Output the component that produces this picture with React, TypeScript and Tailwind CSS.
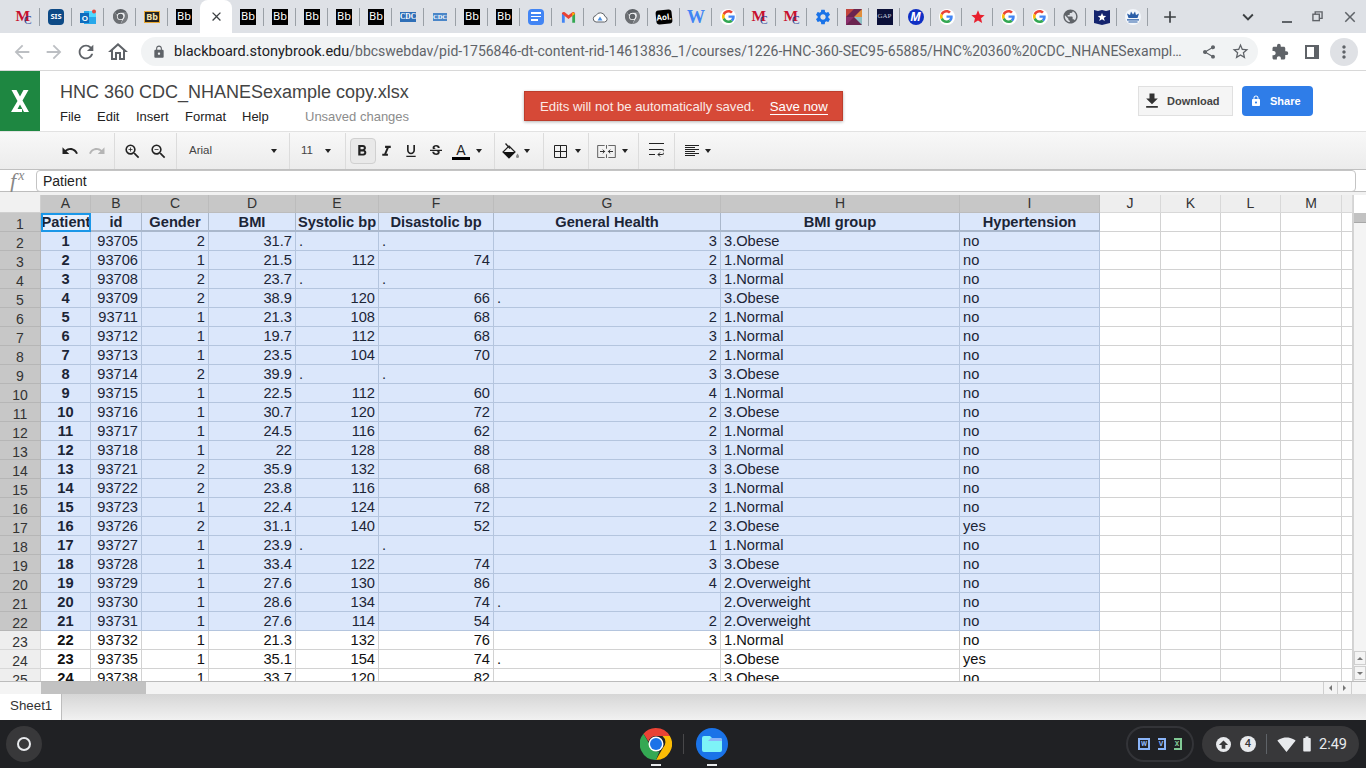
import type { ReactNode } from "react";
import {
  MdAdd,
  MdArrowBack,
  MdArrowForward,
  MdBatteryStd,
  MdClose,
  MdExpandMore,
  MdExtension,
  MdFileDownload,
  MdFormatBold,
  MdFormatItalic,
  MdFormatUnderlined,
  MdLock,
  MdMoreVert,
  MdOutlineHome,
  MdPublic,
  MdRedo,
  MdRefresh,
  MdSettings,
  MdShare,
  MdSignalWifi4Bar,
  MdStar,
  MdStarBorder,
  MdStrikethroughS,
  MdUndo,
  MdZoomIn,
  MdZoomOut,
} from "react-icons/md";

type Fav =
  | "mc" | "sis" | "outlook" | "chrome" | "bbgold" | "bb" | "close" | "cdc" | "cdcs" | "docs" | "gmail"
  | "cloud" | "aol" | "w" | "google" | "gear" | "k" | "gap" | "m" | "star" | "globe" | "shield" | "crown";

const tabs: Fav[] = [
  "mc", "sis", "outlook", "chrome", "bbgold", "bb", "close", "bb", "bb", "bb", "bb", "bb", "cdc", "cdcs",
  "bb", "bb", "docs", "gmail", "cloud", "chrome", "aol", "w", "google", "mc",
  "mc", "gear", "k", "gap", "m", "google", "star", "google", "google", "globe", "shield", "crown",
];

function GoogleG() {
  return (
    <span className="flex h-4 w-4 items-center justify-center rounded-full bg-white">
      <svg viewBox="0 0 48 48" className="h-[13px] w-[13px]">
        <path fill="#EA4335" d="M24 9.5c3.5 0 6.7 1.2 9.2 3.6l6.9-6.9C35.9 2.4 30.4 0 24 0 14.6 0 6.500 5.400 2.600 13.200l8 6.200C12.500 13.700 17.800 9.500 24 9.500z" />
        <path fill="#4285F4" d="M46.900 24.500c0-1.600-.1-3.100-.4-4.500H24v9h12.900c-.6 3-2.200 5.500-4.700 7.200l7.700 6c4.500-4.200 7-10.300 7-17.700z" />
        <path fill="#FBBC05" d="M10.500 28.700c-.5-1.500-.8-3-.8-4.700s.3-3.200.8-4.700l-8-6.200C.9 16.500 0 20.100 0 24s.9 7.500 2.600 10.800l7.900-6.100z" />
        <path fill="#34A853" d="M24 48c6.500 0 11.900-2.100 15.900-5.800l-7.700-6c-2.200 1.400-4.900 2.300-8.200 2.300-6.200 0-11.500-4.200-13.400-9.800l-8 6.100C6.500 42.600 14.600 48 24 48z" />
      </svg>
    </span>
  );
}

function ChromeLogo({
  className,
  red,
  yellow,
  green,
  center,
}: {
  className: string;
  red: string;
  yellow: string;
  green: string;
  center: string;
}) {
  return (
    <svg viewBox="0 0 32 32" className={className}>
      <path d="M16 0a16 16 0 0 1 13.860 8H16a8 8 0 0 0-7.600 5.500L3.500 5.700A16 16 0 0 1 16 0z" fill={red} />
      <path d="M29.860 8A16 16 0 0 1 16 32l6.900-12a8 8 0 0 0-.4-12z" fill={yellow} />
      <path d="M16 32A16 16 0 0 1 3.500 5.700l6 10.300a8 8 0 0 0 10 7.200L16 32z" fill={green} />
      <circle cx="16" cy="16" r="7.500" fill="#fff" />
      <circle cx="16" cy="16" r="6" fill={center} />
    </svg>
  );
}

function Favicon({ kind }: { kind: Fav }) {
  switch (kind) {
    case "mc":
      return (
        <svg viewBox="0 0 18 18" className="h-[18px] w-[18px] overflow-visible">
          <text x="0.500" y="13" fontFamily="Liberation Serif" fontWeight="700" fontSize="15.500" fill="#c8102e">M</text>
          <text x="9" y="16" fontFamily="Liberation Serif" fontSize="11.500" fill="#1d3f94">C</text>
        </svg>
      );
    case "sis":
      return (
        <span className="flex h-4 w-4 items-center justify-center rounded-sm bg-[#0d4a86] text-[7.500px] font-bold text-white">SIS</span>
      );
    case "outlook":
      return (
        <svg viewBox="0 0 16 16" className="h-4 w-4">
          <rect x="4" y="2" width="12" height="13" fill="#28a8ea" />
          <rect x="9" y="2" width="7" height="6" fill="#50d9ff" />
          <circle cx="14" cy="2.500" r="2" fill="#e4473c" />
          <rect x="0" y="4" width="9" height="10" fill="#0f6cbd" />
          <text x="1.700" y="12" fontFamily="Liberation Sans" fontWeight="700" fontSize="8" fill="#fff">O</text>
        </svg>
      );
    case "chrome":
      return <ChromeLogo className="h-[15px] w-[15px]" red="#5f6368" yellow="#7a7d81" green="#6c6f73" center="#5f6368" />;
    case "bbgold":
      return (
        <span className="flex h-[12px] w-4 items-center justify-center border border-[#e8a833] bg-[#222] text-[9px] font-bold text-[#f3e3b0]">Bb</span>
      );
    case "bb":
      return (
        <span className="flex h-4 w-4 items-center justify-center bg-black text-[11px] text-white">Bb</span>
      );
    case "close":
      return <MdClose className="h-[15px] w-[15px] text-[#3c4043]" />;
    case "cdc":
      return (
        <span className="flex h-[10px] w-4 items-center justify-center bg-[#2f6fb7] font-['Liberation_Serif'] text-[7.500px] font-bold text-white">CDC</span>
      );
    case "cdcs":
      return (
        <span className="flex h-[8px] w-[14px] items-center justify-center bg-[#4a86c8] font-['Liberation_Serif'] text-[6.500px] font-bold text-white">CDC</span>
      );
    case "docs":
      return (
        <span className="flex h-4 w-4 flex-col justify-center gap-[2px] rounded-sm bg-[#4285f4] px-[3px]">
          <span className="h-[1.500px] w-full bg-white" />
          <span className="h-[1.500px] w-full bg-white" />
          <span className="h-[1.500px] w-2/3 bg-white" />
        </span>
      );
    case "gmail":
      return (
        <svg viewBox="0 0 16 12" className="h-[12px] w-[15px]">
          <path d="M1 12V2l3 2.500V12z" fill="#4285f4" />
          <path d="M12 12V4.500L15 2v10z" fill="#34a853" />
          <path d="M1 2.500C1 .8 2.500 0 4 1l4 3 4-3c1.500-1 3 0 3 1.500L12 5 8 8 4 5z" fill="#ea4335" />
          <path d="M12 1l3 1.500-3 2.500z" fill="#fbbc05" />
        </svg>
      );
    case "cloud":
      return (
        <svg viewBox="0 0 16 12" className="h-[12px] w-4">
          <path d="M4 11h8.500a2.800 2.800 0 0 0 .5-5.500A4.800 4.800 0 0 0 4 4.500 3.300 3.300 0 0 0 4 11z" fill="#fff" stroke="#5f6368" strokeWidth="1" />
          <path d="M5.500 9.500L8 5.500l2.500 4z" fill="#4a90e2" />
        </svg>
      );
    case "aol":
      return (
        <span className="flex h-[14px] w-4 -rotate-6 items-center justify-center rounded-[3px] bg-black text-[8px] font-bold text-white">Aol.</span>
      );
    case "w":
      return <span className="font-['Liberation_Serif'] text-[18px] leading-none font-bold text-[#4285f4]">W</span>;
    case "google":
      return <GoogleG />;
    case "gear":
      return <MdSettings className="h-[18px] w-[18px] text-[#1a73e8]" />;
    case "k":
      return (
        <svg viewBox="0 0 16 16" className="h-4 w-4">
          <rect width="16" height="16" fill="#6b2450" />
          <path d="M0 0h8L0 8z" fill="#c2453d" />
          <path d="M16 0v8H8z" fill="#e08e3c" />
          <path d="M8 8h8v8z" fill="#8ebfc4" />
          <path d="M0 8h8L0 16z" fill="#8b2f6b" />
        </svg>
      );
    case "gap":
      return (
        <span className="flex h-4 w-4 items-center justify-center bg-[#0b1038] font-['Liberation_Serif'] text-[7px] text-[#c4cadd]">GAP</span>
      );
    case "m":
      return (
        <span className="flex h-4 w-4 items-center justify-center rounded-full bg-[#0f2fc4] text-[12px] font-bold text-white italic">M</span>
      );
    case "star":
      return <MdStar className="h-[16px] w-[16px] text-[#e8202e]" />;
    case "globe":
      return <MdPublic className="h-[17px] w-[17px] text-[#5f6368]" />;
    case "shield":
      return (
        <svg viewBox="0 0 16 16" className="h-4 w-4">
          <path d="M0 1l4 1 4-1 4 1 4-1v13l-8 2-8-2z" fill="#14246e" />
          <path d="M8 4l1.200 2.800 3 .2-2.300 1.900.8 3L8 10.300l-2.700 1.600.8-3L3.800 7l3-.2z" fill="#fff" />
        </svg>
      );
    case "crown":
      return (
        <svg viewBox="0 0 16 16" className="h-4 w-4">
          <circle cx="8" cy="8" r="8" fill="#f2f6fb" />
          <path d="M3.500 9L2 4.500l3 1.500L6 2.500 8 5.500l2-3 1 3.500 3-1.500L12.500 9z" fill="#2a5ea8" />
          <path d="M2 10.800h12M3.500 13h9" stroke="#2a5ea8" strokeWidth="1.200" />
        </svg>
      );
  }
}

function TabStrip() {
  return (
    <div className="flex h-[33px] items-stretch bg-[#dee1e6] pl-2">
      {tabs.map((kind, i) => {
        const active = kind === "close";
        const beforeActive = tabs[i + 1] === "close";
        return (
          <div
            key={i}
            className={
              (i < 24 ? "w-8 " : "w-[31px] ") +
              (active ? "rounded-t-lg bg-white " : "") +
              "relative flex items-center justify-center"
            }
          >
            <span className="flex h-[18px] w-[18px] items-center justify-center">
              <Favicon kind={kind} />
            </span>
            {!active && !beforeActive && <span className="absolute top-2 right-0 h-[18px] w-px bg-[#9aa0a6]" />}
          </div>
        );
      })}
      <div className="ml-[11px] flex w-[22px] items-center justify-center">
        <MdAdd className="h-[20px] w-[20px] text-[#3c4043]" />
      </div>
      <div className="ml-[55px] flex w-[24px] items-center justify-center">
        <MdExpandMore className="h-[22px] w-[22px] text-[#3c4043]" />
      </div>
      <div className="ml-[15px] flex w-[24px] items-center justify-center pt-[3px]">
        <span className="mt-[8px] h-[2px] w-[10px] bg-[#5f6368]" />
      </div>
      <div className="ml-[6px] flex w-[24px] items-center justify-center">
        <svg viewBox="0 0 12 12" className="h-[11px] w-[11px] fill-none stroke-[#5f6368] stroke-[1.500]">
          <rect x="1" y="3.500" width="7" height="7" />
          <path d="M3.500 3.500V1h7.500v7H8" />
        </svg>
      </div>
      <div className="ml-[9px] flex w-[24px] items-center justify-center">
        <MdClose className="h-[18px] w-[18px] text-[#5f6368]" />
      </div>
    </div>
  );
}

function AddressBar() {
  return (
    <div className="flex h-[38px] items-center border-b border-[#d8d8d8] bg-white font-['Roboto',sans-serif]">
      <div className="flex w-[141px] items-center pl-[11px]">
        <MdArrowBack className="h-[22px] w-[22px] text-[#bcbfc3]" />
        <MdArrowForward className="ml-[10px] h-[22px] w-[22px] text-[#bcbfc3]" />
        <MdRefresh className="ml-[10px] h-[22px] w-[22px] text-[#5f6368]" />
        <MdOutlineHome className="ml-[9px] h-[24px] w-[24px] text-[#5f6368]" />
      </div>
      <div className="flex h-[29px] w-[1117px] items-center rounded-full bg-[#f1f3f4] pl-[11px]">
        <MdLock className="h-[14px] w-[14px] text-[#5f6368]" />
        <span className="ml-[8px] w-[1012px] truncate text-[14px] text-[#5f6368]">
          <span className="text-[14.500px] text-[#202124]">blackboard.stonybrook.edu</span>
          /bbcswebdav/pid-1756846-dt-content-rid-14613836_1/courses/1226-HNC-360-SEC95-65885/HNC%20360%20CDC_NHANESexampl…
        </span>
        <MdShare className="ml-[15px] h-[16px] w-[16px] text-[#5f6368]" />
        <MdStarBorder className="ml-[14px] h-[19px] w-[19px] text-[#5f6368]" />
      </div>
      <MdExtension className="ml-[13px] h-[18px] w-[18px] text-[#5f6368]" />
      <svg viewBox="0 0 14 14" className="ml-[16px] h-[14px] w-[14px]">
        <path d="M0 0h14v14H0z" fill="#5f6368" />
        <path d="M2 2h7v10H2z" fill="#fff" />
      </svg>
      <div className="ml-[11px] flex h-[28px] w-[28px] items-center justify-center rounded-full bg-[#dfe1e5]">
        <MdMoreVert className="h-[20px] w-[20px] text-[#5f6368]" />
      </div>
    </div>
  );
}

function TitleArea() {
  return (
    <div className="flex h-[61px] border-b border-[#e2e2e2] bg-white font-['Liberation_Sans',sans-serif]">
      <div className="flex w-10 items-center justify-center bg-[#1e8741]">
        <svg viewBox="0 0 18 22" className="h-[22px] w-[18px]">
          <path d="M.5 0h5L9 6.500 12.500 0h5l-6 10.500L18 22h-5l-4-7.500L6.500 19H11v3H0l6.500-11z" fill="#fff" />
        </svg>
      </div>
      <div className="w-[484px] pt-[9px] pl-[20px]">
        <div className="text-[18px] leading-[24px] text-[#444]">HNC 360 CDC_NHANESexample copy.xlsx</div>
        <div className="mt-[4px] flex text-[13px] leading-[18px] text-[#222]">
          <span className="w-[37px]">File</span>
          <span className="w-[39px]">Edit</span>
          <span className="w-[49px]">Insert</span>
          <span className="w-[57px]">Format</span>
          <span className="w-[63px]">Help</span>
          <span className="text-[#8c8c8c]">Unsaved changes</span>
        </div>
      </div>
      <div className="mt-[20px] flex h-[30px] w-[319px] items-center border border-[#bd3d2c] bg-[#d64937] pt-px pl-[15px] text-[13.200px] text-[#fbe9e6] shadow-[0_1px_3px_rgba(0,0,0,0.3)]">
        <span>Edits will not be automatically saved.</span>
        <span className="ml-[15px] border-b border-white leading-[15px] text-white">Save now</span>
      </div>
      <div className="mt-[15px] ml-[295px] flex h-[30px] w-[95px] items-center gap-[5px] border border-[#e0e0e0] bg-[#f5f5f5] pl-[3px] text-[11px] font-bold text-[#444]">
        <MdFileDownload className="h-[20px] w-[20px] text-[#333]" />
        Download
      </div>
      <div className="mt-[15px] ml-[9px] flex h-[30px] w-[71px] items-center gap-[8px] rounded-sm bg-[#2f7de8] pl-[8px] text-[11px] font-bold text-white">
        <MdLock className="h-[12px] w-[12px]" />
        Share
      </div>
    </div>
  );
}

function Caret() {
  return <span className="h-0 w-0 border-x-[3.500px] border-t-[4px] border-x-transparent border-t-[#222]" />;
}

function ToolGroup({ width, className = "", children }: { width: string; className?: string; children: ReactNode }) {
  return (
    <div className={width + " flex h-full items-center border-r border-[#dcdcdc] " + className}>{children}</div>
  );
}

function Toolbar() {
  return (
    <div className="flex h-[38px] border-b border-[#c0c0c0] bg-gradient-to-b from-[#f8f8f8] to-[#ececec] pt-px font-['Liberation_Sans',sans-serif] text-[#222]">
      <ToolGroup width="w-[115px]" className="pl-[61px]">
        <MdUndo className="h-[18px] w-[18px] text-[#222]" />
        <MdRedo className="ml-[9px] h-[18px] w-[18px] text-[#b5b5b5]" />
      </ToolGroup>
      <ToolGroup width="w-[62px]" className="pl-[8px]">
        <MdZoomIn className="h-[19px] w-[19px] text-[#222]" />
        <MdZoomOut className="ml-[7px] h-[19px] w-[19px] text-[#222]" />
      </ToolGroup>
      <ToolGroup width="w-[113px]" className="pl-[12px] text-[11.500px] text-[#444]">
        <span className="w-[82px]">Arial</span>
        <Caret />
      </ToolGroup>
      <ToolGroup width="w-[56px]" className="pl-[11px] text-[11.500px] text-[#444]">
        <span className="w-[24px]">11</span>
        <Caret />
      </ToolGroup>
      <ToolGroup width="w-[149px]" className="pl-[4px]">
        <span className="flex h-[26px] w-[26px] items-center justify-center rounded-sm border border-[#d0d0d0] bg-[#e9e9e9] pr-[3px]">
          <MdFormatBold className="h-[18px] w-[18px]" />
        </span>
        <span className="flex w-[20px] justify-center"><MdFormatItalic className="h-[17px] w-[17px]" /></span>
        <span className="ml-[5px] flex w-[20px] justify-center"><MdFormatUnderlined className="h-[16px] w-[16px]" /></span>
        <span className="ml-[5px] flex w-[20px] justify-center"><MdStrikethroughS className="h-[16px] w-[16px]" /></span>
        <span className="ml-[6px] flex w-[18px] flex-col items-center text-[14px] leading-[14px]">
          A
          <span className="h-[3px] w-[18px] bg-black" />
        </span>
        <span className="ml-[6px] flex"><Caret /></span>
      </ToolGroup>
      <ToolGroup width="w-[49px]" className="pl-[7px]">
        <svg viewBox="0 0 18 16" className="h-[16px] w-[18px]">
          <path d="M7 3l6 6-6 6-6-6z" fill="none" stroke="#222" strokeWidth="1.200" />
          <path d="M1 9h12l-6 6z" fill="#111" />
          <path d="M3.500 0.500l4.500 5" stroke="#222" strokeWidth="1.300" />
          <path d="M15.500 10.500c1 1.500 1.500 2.300 1.500 3a1.500 1.500 0 0 1-3 0c0-.7.5-1.500 1.500-3z" fill="#888" />
        </svg>
        <span className="ml-[4px] flex"><Caret /></span>
      </ToolGroup>
      <ToolGroup width="w-[45px]" className="pl-[10px]">
        <svg viewBox="0 0 13 13" className="h-[13px] w-[13px] fill-none stroke-[#222]">
          <path d="M.5.500h12v12H.500zM6.500.500v12M.5 6.500h12" />
        </svg>
        <span className="ml-[8px] flex"><Caret /></span>
      </ToolGroup>
      <ToolGroup width="w-[50px]" className="pl-[8px]">
        <svg viewBox="0 0 20 14" className="h-[13px] w-[19px] fill-none stroke-[#555]">
          <path d="M8 .5H.5v13H8M12 .5h7.500v13H12M10 0v4M10 10v4" />
          <path d="M3 7h5M17 7h-5M6 5l2 2-2 2M14 5l-2 2 2 2" stroke="#222" />
        </svg>
        <span className="ml-[6px] flex"><Caret /></span>
      </ToolGroup>
      <ToolGroup width="w-[36px]" className="justify-center">
        <svg viewBox="0 0 15 16" className="h-[16px] w-[15px] fill-none stroke-[#222]">
          <path d="M0 .5h15M0 6.500h13a2.500 2.500 0 0 1 0 5H9M11 9.500l-2 2 2 2M0 11.500h6" />
        </svg>
      </ToolGroup>
      <div className="flex h-full items-center pl-[10px]">
        <svg viewBox="0 0 14 12" className="h-[12px] w-[14px] stroke-[#222]">
          <path d="M0 .5h14M0 2.500h10M0 4.500h14M0 6.500h10M0 8.500h14M0 10.500h10" />
        </svg>
        <span className="ml-[6px] flex"><Caret /></span>
      </div>
    </div>
  );
}

function FormulaBar() {
  return (
    <div className="flex h-[22px] items-start border-b border-[#bdbdbd] bg-white font-['Liberation_Sans',sans-serif]">
      <span className="flex w-[36px] items-start pl-[10px] font-['Liberation_Serif'] text-[#888] italic">
        <span className="text-[22px] leading-[22px]">f</span>
        <span className="ml-[2px] text-[14px] leading-[12px]">x</span>
      </span>
      <div className="h-[22px] w-[1320px] rounded-sm border border-[#c4c4c4] pl-[6px] text-[14px] leading-[20px] text-[#222]">Patient</div>
    </div>
  );
}

type Row = [number, number, number, string, string, string, string, string, string];
const rows: Row[] = [
  [1, 93705, 2, "31.7", ".", ".", "3", "3.Obese", "no"],
  [2, 93706, 1, "21.5", "112", "74", "2", "1.Normal", "no"],
  [3, 93708, 2, "23.7", ".", ".", "3", "1.Normal", "no"],
  [4, 93709, 2, "38.9", "120", "66", ".", "3.Obese", "no"],
  [5, 93711, 1, "21.3", "108", "68", "2", "1.Normal", "no"],
  [6, 93712, 1, "19.7", "112", "68", "3", "1.Normal", "no"],
  [7, 93713, 1, "23.5", "104", "70", "2", "1.Normal", "no"],
  [8, 93714, 2, "39.9", ".", ".", "3", "3.Obese", "no"],
  [9, 93715, 1, "22.5", "112", "60", "4", "1.Normal", "no"],
  [10, 93716, 1, "30.7", "120", "72", "2", "3.Obese", "no"],
  [11, 93717, 1, "24.5", "116", "62", "2", "1.Normal", "no"],
  [12, 93718, 1, "22", "128", "88", "3", "1.Normal", "no"],
  [13, 93721, 2, "35.9", "132", "68", "3", "3.Obese", "no"],
  [14, 93722, 2, "23.8", "116", "68", "3", "1.Normal", "no"],
  [15, 93723, 1, "22.4", "124", "72", "2", "1.Normal", "no"],
  [16, 93726, 2, "31.1", "140", "52", "2", "3.Obese", "yes"],
  [17, 93727, 1, "23.9", ".", ".", "1", "1.Normal", "no"],
  [18, 93728, 1, "33.4", "122", "74", "3", "3.Obese", "no"],
  [19, 93729, 1, "27.6", "130", "86", "4", "2.Overweight", "no"],
  [20, 93730, 1, "28.6", "134", "74", ".", "2.Overweight", "no"],
  [21, 93731, 1, "27.6", "114", "54", "2", "2.Overweight", "no"],
  [22, 93732, 1, "21.3", "132", "76", "3", "1.Normal", "no"],
  [23, 93735, 1, "35.1", "154", "74", ".", "3.Obese", "yes"],
  [24, 93738, 1, "33.7", "120", "82", "3", "3.Obese", "no"],
];

const headers = ["Patient", "id", "Gender", "BMI", "Systolic bp", "Disastolic bp", "General Health", "BMI group", "Hypertension"];
const letters = ["A", "B", "C", "D", "E", "F", "G", "H", "I", "J", "K", "L", "M", ""];

function Cell({ value, col, selected }: { value?: string; col: number; selected: boolean }) {
  const isText = value === "." || col === 7 || col === 8;
  return (
    <div
      className={
        "h-full overflow-hidden border-r border-b px-[3px] text-[14.670px] leading-[19px] whitespace-nowrap " +
        (selected ? "border-[#b4c5de] bg-[#dbe7fb] text-[#1c2536] " : "border-[#d2d2d2] bg-white text-[#111] ") +
        (col === 0 ? "text-center font-bold " : isText ? "text-left " : "text-right ")
      }
    >
      {value}
    </div>
  );
}

function SheetGrid() {
  return (
    <div className="grid h-[486px] grid-cols-[41px_50px_51px_67px_87px_83px_115px_227px_239px_140px_61px_60px_60px_61px_11px] grid-rows-[18px_19px_repeat(24,19px)] overflow-hidden font-['Liberation_Sans',sans-serif]">
      <div className="border-r border-b border-[#d0d0d0] bg-[#f1f1f1]" />
      {letters.map((l, i) => (
        <div
          key={i}
          className={
            "border-r border-b text-center text-[14px] leading-[17px] text-[#333] " +
            (i < 9 ? "border-[#bcbcbc] bg-[#c7c7c7]" : "border-[#d8d8d8] bg-[#eeeeee]")
          }
        >
          {l}
        </div>
      ))}

      <div className="border-r border-b border-[#b6b6b6] bg-[#c7c7c7] pt-[3px] text-center text-[14px] leading-[17px] text-[#333]">1</div>
      {letters.map((_, i) =>
        i === 0 ? (
          <div key={i} className="flex justify-center overflow-hidden border-2 border-[#1a97e8] bg-[#e6effc] text-[14.670px] leading-[15px] font-bold whitespace-nowrap text-[#1c2536]">
            <span className="shrink-0">Patient</span>
          </div>
        ) : i < 9 ? (
          <div key={i} className="overflow-hidden border-r border-b-2 border-[#aab8cc] bg-[#dbe7fb] text-center text-[14.670px] leading-[18px] font-bold whitespace-nowrap text-[#1c2536]">
            {headers[i]}
          </div>
        ) : (
          <Cell key={i} col={i} selected={false} />
        ),
      )}

      {rows.map((row, r) => (
        <div key={r} className="contents">
          <div
            className={
              "border-r border-b pt-[3px] text-center text-[14px] leading-[17px] text-[#333] " +
              (r < 21 ? "border-[#b6b6b6] bg-[#c7c7c7]" : "border-[#d8d8d8] bg-[#eeeeee]")
            }
          >
            {r + 2}
          </div>
          {letters.map((_, c) => (
            <Cell key={c} col={c} value={c < 9 ? String(row[c]) : undefined} selected={r < 21 && c < 9} />
          ))}
        </div>
      ))}
    </div>
  );
}

function VScroll() {
  return (
    <div className="flex h-[486px] w-[13px] flex-col border-l border-[#d4d4d4] bg-[#f4f4f4]">
      <div className="h-[18px] bg-white" />
      <div className="h-[10px] border-b border-[#a8a8a8] bg-[#c2c2c2]" />
      <div className="flex-1" />
      <div className="flex h-[14px] items-center justify-center border border-[#cfcfcf]">
        <span className="h-0 w-0 border-x-[3px] border-b-[3px] border-x-transparent border-b-[#777]" />
      </div>
      <div className="mt-px flex h-[14px] items-center justify-center border border-[#cfcfcf]">
        <span className="h-0 w-0 border-x-[3px] border-t-[3px] border-x-transparent border-t-[#777]" />
      </div>
      <div className="h-px" />
    </div>
  );
}

function HScroll() {
  return (
    <div className="flex h-[13px] border-t border-[#bcbcbc] bg-[#f4f4f4]">
      <div className="w-[41px]" />
      <div className="w-[105px] bg-[#c2c2c2]" />
      <div className="w-[1177px]" />
      <div className="flex w-[15px] items-center justify-center border-x border-[#cfcfcf]">
        <span className="h-0 w-0 border-y-[3px] border-r-[3px] border-y-transparent border-r-[#777]" />
      </div>
      <div className="flex w-[14px] items-center justify-center border-r border-[#cfcfcf]">
        <span className="h-0 w-0 border-y-[3px] border-l-[3px] border-y-transparent border-l-[#777]" />
      </div>
    </div>
  );
}

function SheetTabs() {
  return (
    <div className="flex h-[26px] bg-gradient-to-b from-[#d6d6d6] to-[#f1f1f1] font-['Liberation_Sans',sans-serif]">
      <div className="h-full w-[62px] border-r border-[#bdbdbd] bg-white pl-[10px] text-[13.330px] leading-[24px] text-[#333]">Sheet1</div>
    </div>
  );
}

function Taskbar() {
  return (
    <div className="flex h-12 items-center bg-[#202124] font-['Roboto',sans-serif]">
      <div className="ml-[6px] flex h-9 w-9 items-center justify-center rounded-full bg-[#38383a]">
        <span className="h-[14px] w-[14px] rounded-full border-2 border-[#e8eaed]" />
      </div>
      <div className="ml-[598px] flex h-full w-8 flex-col items-center justify-end">
        <ChromeLogo className="h-8 w-8" red="#ea4335" yellow="#fbbc05" green="#34a853" center="#1a73e8" />
        <span className="mt-[4px] mb-[2px] h-[2px] w-[10px] bg-[#e8eaed]" />
      </div>
      <span className="ml-[11px] h-5 w-px bg-[#48484a]" />
      <div className="ml-[12px] flex h-full w-8 flex-col items-center justify-end">
        <span className="flex h-8 w-8 items-center justify-center rounded-full bg-[#1a73e8]">
          <svg viewBox="0 0 20 16" className="h-[16px] w-[20px]">
            <path d="M0 2a2 2 0 0 1 2-2h6l2 2h8a2 2 0 0 1 2 2v10a2 2 0 0 1-2 2H2a2 2 0 0 1-2-2z" fill="#7df3f7" />
            <path d="M9 2h9a2 2 0 0 1 2 2v1H6z" fill="#8ab4f8" />
          </svg>
        </span>
        <span className="mt-[4px] mb-[2px] h-[2px] w-[10px] bg-[#e8eaed]" />
      </div>
      <div className="ml-[398px] flex h-9 w-[68px] items-center rounded-full border-2 border-[#333438] pl-[10px]">
        <span className="flex h-[12px] w-[12px] items-center justify-center border-2 border-[#8ab4f8] text-[7px] leading-none font-bold text-[#8ab4f8]">W</span>
        <span className="ml-[8px] flex h-[12px] w-[8px] items-center justify-center border-y-2 border-r-2 border-[#8ab4f8] text-[7px] leading-none font-bold text-[#8ab4f8]">V</span>
        <span className="ml-[8px] flex h-[12px] w-[8px] items-center justify-center border-y-2 border-r-2 border-[#81c995] text-[7px] leading-none font-bold text-[#81c995]">X</span>
      </div>
      <div className="ml-[8px] flex h-9 w-[157px] items-center rounded-full bg-[#38383a] pl-[14px]">
        <span className="flex h-[15px] w-[15px] items-center justify-center rounded-full bg-[#e8eaed]">
          <svg viewBox="0 0 12 12" className="h-[11px] w-[11px]">
            <path d="M6 1.500l5 5H8v4H4v-4H1z" fill="#38383a" />
          </svg>
        </span>
        <span className="ml-[9px] flex h-[16px] w-[16px] items-center justify-center rounded-full bg-[#e8eaed] text-[11px] font-medium text-[#38383a]">4</span>
        <span className="ml-[10px] h-5 w-px bg-[#5f6368]" />
        <MdSignalWifi4Bar className="ml-[10px] h-[19px] w-[19px] text-[#e8eaed]" />
        <MdBatteryStd className="ml-[2px] h-[18px] w-[18px] text-[#e8eaed]" />
        <span className="ml-[3px] pt-[2px] text-[14.500px] text-[#e8eaed]">2:49</span>
      </div>
    </div>
  );
}

export default function App() {
  return (
    <div className="flex h-[768px] w-[1366px] flex-col overflow-hidden bg-white">
      <TabStrip />
      <AddressBar />
      <TitleArea />
      <Toolbar />
      <FormulaBar />
      <div className="h-[3px] bg-[#f1f1f1]" />
      <div className="flex">
        <SheetGrid />
        <VScroll />
      </div>
      <HScroll />
      <SheetTabs />
      <Taskbar />
    </div>
  );
}
